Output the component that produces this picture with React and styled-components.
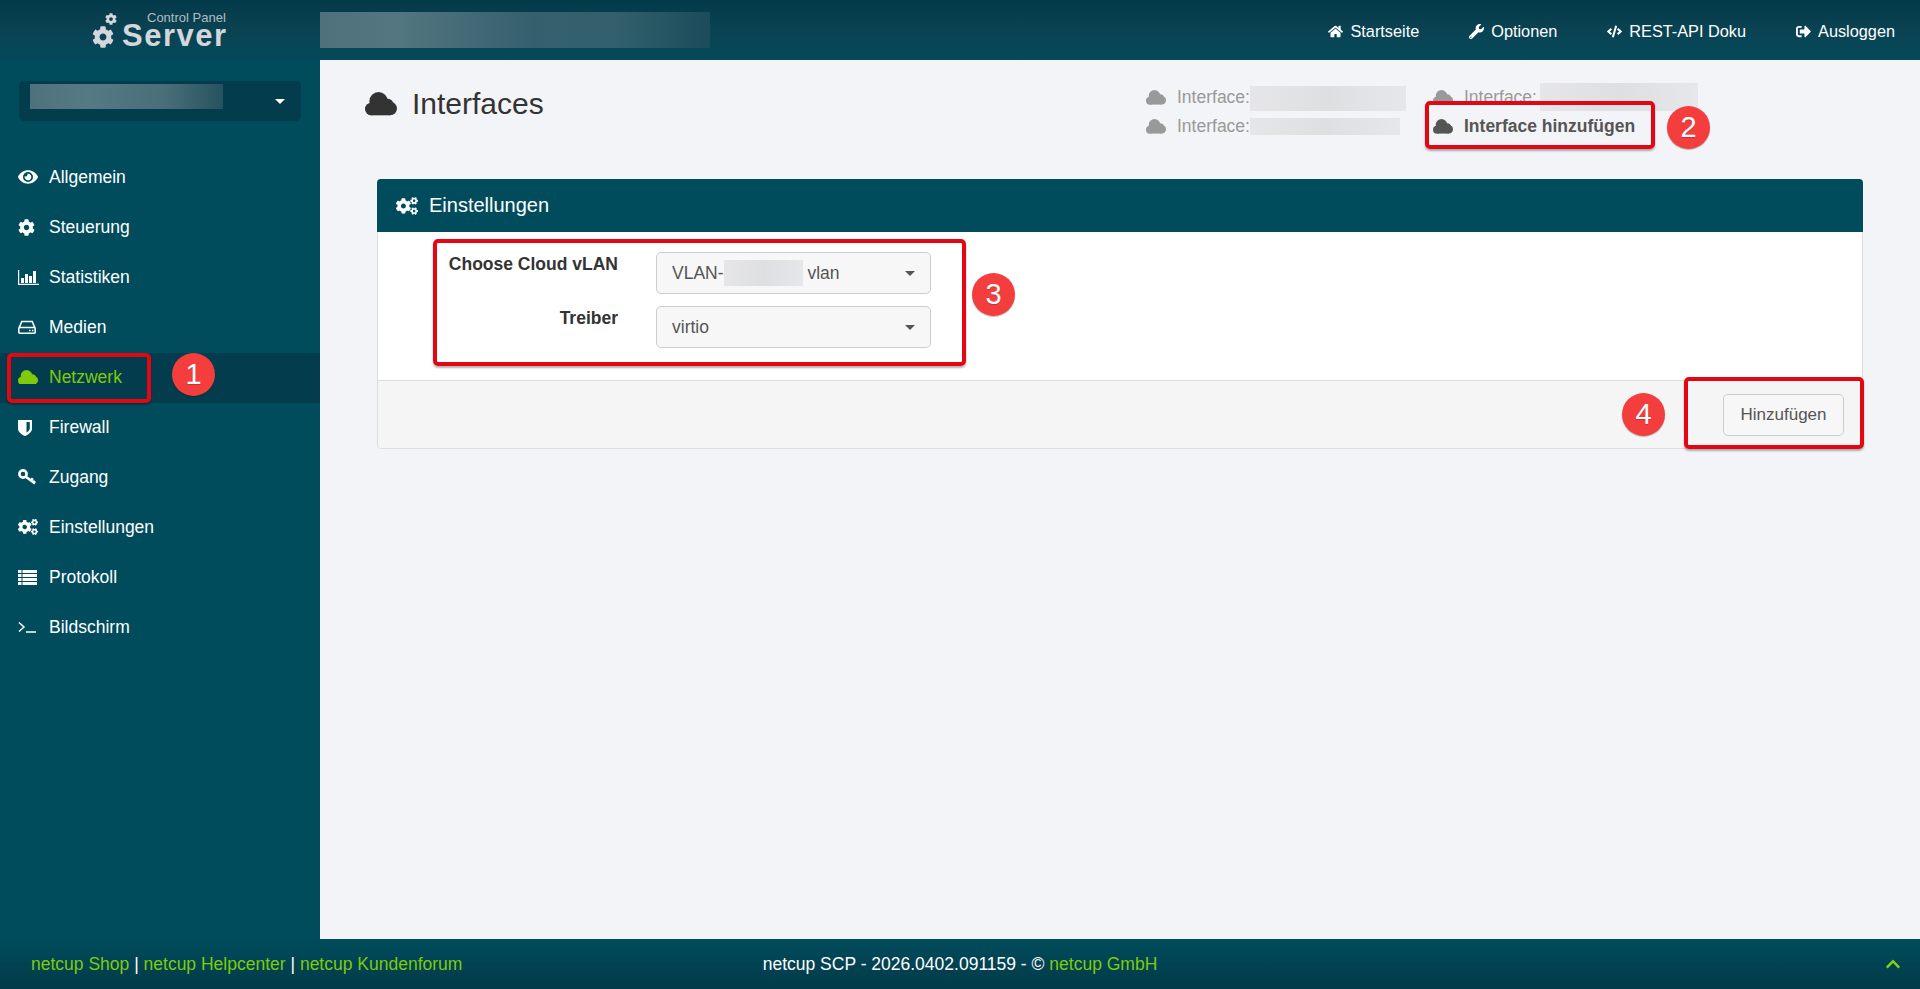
import React from 'react';
import styled, { createGlobalStyle } from 'styled-components';
import {
  FaEye,
  FaCog,
  FaCogs,
  FaHome,
  FaWrench,
  FaCode,
  FaSignOutAlt,
  FaChevronUp,
} from 'react-icons/fa';

const GlobalStyle = createGlobalStyle`
  html, body {
    margin: 0;
    padding: 0;
    height: 100%;
  }
  body {
    font-family: "Liberation Sans", Arial, sans-serif;
    font-size: 17.5px;
    color: #333;
    background: #f3f4f8;
  }
  * {
    box-sizing: border-box;
  }
`;

const Page = styled.div`
  display: grid;
  grid-template-rows: 60px 1fr 50px;
  height: 100vh;
  overflow: hidden;
`;

const TopBar = styled.header`
  display: flex;
  align-items: center;
  background: linear-gradient(180deg, #033a49 0%, #0a4252 45%, #04495a 100%);
  color: #fff;
`;

const LogoBox = styled.div`
  position: relative;
  width: 320px;
  height: 60px;
  flex: none;
`;

const LogoName = styled.span`
  position: absolute;
  left: 122px;
  top: 24px;
  font-size: 31px;
  font-weight: bold;
  letter-spacing: 1.5px;
  line-height: 24px;
  color: #d3d7db;
`;

const LogoSub = styled.span`
  position: absolute;
  left: 147px;
  top: 12px;
  font-size: 13px;
  line-height: 12px;
  color: #b4bcc1;
`;

const LogoGear = styled.span`
  position: absolute;
  left: ${(p) => p.$left}px;
  top: ${(p) => p.$top}px;
  display: flex;
  font-size: ${(p) => p.$size}px;
  color: #d3d7db;
`;

const Smudge = styled.div`
  flex: none;
  width: ${(p) => p.$width}px;
  height: ${(p) => p.$height}px;
  background: ${(p) =>
    p.$dark
      ? 'linear-gradient(90deg, #4f717c 0%, #567a84 30%, #4a6e79 70%, #25535f 100%)'
      : 'linear-gradient(90deg, #e6e6e8 0%, #dedfe1 50%, #e6e7ea 100%)'};
`;

const HeaderSmudge = styled(Smudge)`
  background: linear-gradient(90deg, #4f717c 0%, #537680 20%, #355f6c 55%, #33606c 75%, #1b4c5b 100%);
`;

const TopNav = styled.nav`
  display: flex;
  align-items: center;
  gap: 50px;
  margin-left: auto;
  padding-right: 25px;
  margin-top: 2px;
  font-size: 16.3px;
`;

const TopLink = styled.a`
  display: flex;
  align-items: center;
  gap: 7px;
  color: #fff;
  line-height: 22px;
  svg {
    font-size: 15px;
  }
`;

const Middle = styled.div`
  display: flex;
  min-height: 0;
`;

const Sidebar = styled.aside`
  width: 320px;
  flex: none;
  background: #004c5c;
`;

const ServerPicker = styled.div`
  display: flex;
  align-items: flex-start;
  justify-content: space-between;
  width: 282px;
  height: 40px;
  margin: 21px 0 32px 19px;
  padding: 3px 16px 0 11px;
  border-radius: 5px;
  background: #033c4c;
`;

const PickerCaret = styled.i`
  width: 0;
  height: 0;
  margin-top: 15px;
  border-left: 5px solid transparent;
  border-right: 5px solid transparent;
  border-top: 5px solid #fff;
`;

const NavRow = styled.a`
  position: relative;
  display: flex;
  align-items: center;
  height: 50px;
  padding: 0 0 2px 18px;
  background: ${(p) => (p.$active ? '#033c4c' : 'transparent')};
  color: ${(p) => (p.$active ? '#7fcb0a' : '#fff')};
`;

const NavIcon = styled.span`
  display: flex;
  align-items: center;
  width: 31px;
  flex: none;
  font-size: 20px;
`;

const Content = styled.main`
  flex: 1;
  min-width: 0;
  padding: 0 57px;
  background: #f3f4f8;
`;

const TitleRow = styled.div`
  display: flex;
  justify-content: space-between;
  height: 119px;
  margin-left: -12px;
  padding-right: 143px;
`;

const Title = styled.h1`
  display: flex;
  align-items: center;
  gap: 15px;
  height: 40px;
  margin: 24px 0 0;
  font-size: 30px;
  font-weight: normal;
  line-height: 40px;
  color: #333;
`;

const Tabs = styled.div`
  position: relative;
  display: grid;
  grid-template-columns: 287px 287px;
  grid-auto-rows: 29px;
  align-self: flex-start;
  margin-top: 23px;
`;

const Tab = styled.a`
  display: flex;
  align-items: center;
  color: ${(p) => (p.$active ? '#555' : '#999')};
  font-weight: ${(p) => (p.$active ? 'bold' : 'normal')};
  svg {
    margin-right: 11px;
  }
`;

const TabSmudge = styled(Smudge)`
  margin-left: ${(p) => p.$gap || 0}px;
  margin-top: ${(p) => p.$shift || 0}px;
`;

const Panel = styled.section`
  border: 1px solid #ddd;
  border-radius: 4px;
  background: #fff;
`;

const PanelHead = styled.div`
  display: flex;
  align-items: center;
  gap: 11px;
  height: 53px;
  margin: -1px -1px 0;
  padding-left: 19px;
  border-radius: 4px 4px 0 0;
  background: #004c5c;
  color: #fff;
  font-size: 20px;
  svg {
    font-size: 22px;
  }
`;

const PanelBody = styled.div`
  position: relative;
  display: grid;
  grid-template-columns: 240px 275px;
  grid-auto-rows: 42px;
  column-gap: 38px;
  row-gap: 12px;
  padding: 20px 0 32px;
`;

const FieldLabel = styled.label`
  font-weight: bold;
  line-height: 24px;
  text-align: right;
  color: #333;
`;

const SelectBox = styled.div`
  display: flex;
  align-items: center;
  padding: 0 15px;
  border: 1px solid #ccc;
  border-radius: 5px;
  background: #f7f7f7;
  color: #555;
`;

const SelectCaret = styled.i`
  width: 0;
  height: 0;
  margin-left: auto;
  border-left: 5px solid transparent;
  border-right: 5px solid transparent;
  border-top: 5px solid #555;
`;

const PanelFoot = styled.div`
  position: relative;
  display: flex;
  align-items: center;
  justify-content: flex-end;
  height: 68px;
  padding-right: 18px;
  border-top: 1px solid #ddd;
  border-radius: 0 0 4px 4px;
  background: #f5f5f5;
`;

const Button = styled.button`
  width: 121px;
  height: 42px;
  padding: 0;
  border: 1px solid #ccc;
  border-radius: 5px;
  background: #f7f7f7;
  color: #555;
  font: inherit;
  font-size: 17px;
`;

const Outline = styled.div`
  position: absolute;
  left: ${(p) => p.$left}px;
  top: ${(p) => p.$top}px;
  width: ${(p) => p.$width}px;
  height: ${(p) => p.$height}px;
  border: 4px solid #e30613;
  border-radius: 5px;
  box-shadow: 0 2px 2px rgba(0, 0, 0, 0.3);
  pointer-events: none;
`;

const Marker = styled.span`
  position: absolute;
  left: ${(p) => p.$left}px;
  top: ${(p) => p.$top}px;
  display: flex;
  align-items: center;
  justify-content: center;
  width: 43px;
  height: 43px;
  border-radius: 50%;
  background: #f43e3e;
  box-shadow: 0 1px 1px rgba(0, 0, 0, 0.25);
  color: #fff;
  font-size: 29px;
  font-weight: normal;
  line-height: 1;
  text-shadow: 0 1px 1px rgba(0, 0, 0, 0.2);
`;

const BottomBar = styled.footer`
  display: grid;
  grid-template-columns: 1fr auto 1fr;
  align-items: center;
  padding: 0 19px;
  background: linear-gradient(180deg, #004c5c 0%, #033a49 100%);
  color: #fff;
`;

const FooterLinks = styled.div`
  margin-left: 12px;
`;

const GreenLink = styled.a`
  color: #7fcb0a;
`;

const UpArrow = styled.span`
  justify-self: end;
  display: flex;
  color: #86cf14;
  font-size: 16px;
`;

const Cloud = ({ width = 20 }) => (
  <svg width={width} height={width * 0.73} viewBox="0 0 33 24" fill="currentColor">
    <circle cx="14" cy="9.500" r="9.500" />
    <circle cx="6.500" cy="17.500" r="6.500" />
    <circle cx="26" cy="17" r="7" />
    <circle cx="23.500" cy="13" r="6" />
    <rect x="6" y="12" width="20" height="12" />
  </svg>
);

const Shield = () => (
  <svg width="14" height="17" viewBox="0 0 14 17" fill="currentColor">
    <path d="M0 1h14v8.500C14 13 10.500 15.500 7 17 3.500 15.500 0 13 0 9.500zM8.500 3v10.500c1.800-1 3.300-2.400 3.300-4.200V3z" fillRule="evenodd" />
  </svg>
);

const Prompt = () => (
  <svg width="18" height="12" viewBox="0 0 18 12" fill="none" stroke="currentColor" strokeWidth="1.500">
    <path d="M1 1.500 6 6 1 10.500M8 11h10" />
  </svg>
);

const Bars = () => (
  <svg width="21" height="15" viewBox="0 0 21 15" fill="currentColor">
    <path d="M0 0h1.200v13.800H21V15H0z" />
    <path d="M3 8h3v5H3zM7 4h3v9H7zM11 6h3v7h-3zM15 1h3v12h-3z" />
  </svg>
);

const Disk = () => (
  <svg width="18" height="14" viewBox="0 0 18 14" fill="none" stroke="currentColor" strokeWidth="1.600">
    <path d="M1 8 3.800 1.500h10.400L17 8M1.500 7.500h15a.700.700 0 0 1 .700.700v4a1 1 0 0 1-1 1H1.800a1 1 0 0 1-1-1v-4a.700.700 0 0 1 .700-.700z" />
    <path d="M11 10.500h1.500M14 10.500h1.500" strokeWidth="1.400" />
  </svg>
);

const KeyIcon = () => (
  <svg width="18" height="16" viewBox="0 0 18 16" fill="none" stroke="currentColor" strokeWidth="2.600">
    <circle cx="5" cy="5" r="3.600" />
    <path d="M7.800 7.800 17 14.500M13 11.500l1.800-2.200M15.500 13.500l1.300-1.600" />
  </svg>
);

const Rows = () => (
  <svg width="19" height="15" viewBox="0 0 19 15" fill="currentColor">
    <path d="M0 0h3.500v3H0zM4.500 0H19v3H4.500zM0 4h3.500v3H0zM4.500 4H19v3H4.500zM0 8h3.500v3H0zM4.500 8H19v3H4.500zM0 12h3.500v3H0zM4.500 12H19v3H4.500z" />
  </svg>
);

const navItems = [
  { label: 'Allgemein', icon: <FaEye /> },
  { label: 'Steuerung', icon: <FaCog style={{ fontSize: 17 }} /> },
  { label: 'Statistiken', icon: <Bars /> },
  { label: 'Medien', icon: <Disk /> },
  { label: 'Netzwerk', icon: <Cloud />, active: true },
  { label: 'Firewall', icon: <Shield /> },
  { label: 'Zugang', icon: <KeyIcon /> },
  { label: 'Einstellungen', icon: <FaCogs /> },
  { label: 'Protokoll', icon: <Rows /> },
  { label: 'Bildschirm', icon: <Prompt /> },
];

export default function App() {
  return (
    <Page>
      <GlobalStyle />
      <TopBar>
        <LogoBox>
          <LogoGear $left={92} $top={26} $size={22}>
            <FaCog />
          </LogoGear>
          <LogoGear $left={105} $top={13} $size={12}>
            <FaCog />
          </LogoGear>
          <LogoSub>Control Panel</LogoSub>
          <LogoName>Server</LogoName>
        </LogoBox>
        <HeaderSmudge $width={390} $height={36} />
        <TopNav>
          <TopLink>
            <FaHome />
            Startseite
          </TopLink>
          <TopLink>
            <FaWrench />
            Optionen
          </TopLink>
          <TopLink>
            <FaCode />
            REST-API Doku
          </TopLink>
          <TopLink>
            <FaSignOutAlt />
            Ausloggen
          </TopLink>
        </TopNav>
      </TopBar>

      <Middle>
        <Sidebar>
          <ServerPicker>
            <Smudge $dark $width={193} $height={25} />
            <PickerCaret />
          </ServerPicker>
          {navItems.map((item) => (
            <NavRow key={item.label} $active={item.active}>
              <NavIcon>{item.icon}</NavIcon>
              {item.label}
              {item.active && (
                <>
                  <Outline $left={7} $top={0} $width={144} $height={50} />
                  <Marker $left={172} $top={0}>1</Marker>
                </>
              )}
            </NavRow>
          ))}
        </Sidebar>

        <Content>
          <TitleRow>
            <Title>
              <Cloud width={32} />
              Interfaces
            </Title>
            <Tabs>
              <Tab>
                <Cloud />
                Interface:
                <TabSmudge $width={156} $height={25} $shift={2} />
              </Tab>
              <Tab>
                <Cloud />
                Interface:
                <TabSmudge $gap={3} $width={158} $height={28} $shift={-2} />
              </Tab>
              <Tab>
                <Cloud />
                Interface:
                <TabSmudge $width={150} $height={17} />
              </Tab>
              <Tab $active>
                <Cloud />
                Interface hinzufügen
              </Tab>
              <Outline $left={279} $top={18} $width={230} $height={48} />
              <Marker $left={521} $top={23}>2</Marker>
            </Tabs>
          </TitleRow>

          <Panel>
            <PanelHead>
              <FaCogs />
              Einstellungen
            </PanelHead>
            <PanelBody>
              <FieldLabel>Choose Cloud vLAN</FieldLabel>
              <SelectBox>
                VLAN-
                <Smudge $width={79} $height={26} />
                &nbsp;vlan
                <SelectCaret />
              </SelectBox>
              <FieldLabel>Treiber</FieldLabel>
              <SelectBox>
                virtio
                <SelectCaret />
              </SelectBox>
              <Outline $left={55} $top={7} $width={533} $height={127} />
              <Marker $left={594} $top={41}>3</Marker>
            </PanelBody>
            <PanelFoot>
              <Button>Hinzufügen</Button>
              <Outline $left={1306} $top={-4} $width={180} $height={72} />
              <Marker $left={1244} $top={12}>4</Marker>
            </PanelFoot>
          </Panel>
        </Content>
      </Middle>

      <BottomBar>
        <FooterLinks>
          <GreenLink>netcup Shop</GreenLink> | <GreenLink>netcup Helpcenter</GreenLink> |{' '}
          <GreenLink>netcup Kundenforum</GreenLink>
        </FooterLinks>
        <div>
          netcup SCP - 2026.0402.091159 - © <GreenLink>netcup GmbH</GreenLink>
        </div>
        <UpArrow>
          <FaChevronUp />
        </UpArrow>
      </BottomBar>
    </Page>
  );
}
